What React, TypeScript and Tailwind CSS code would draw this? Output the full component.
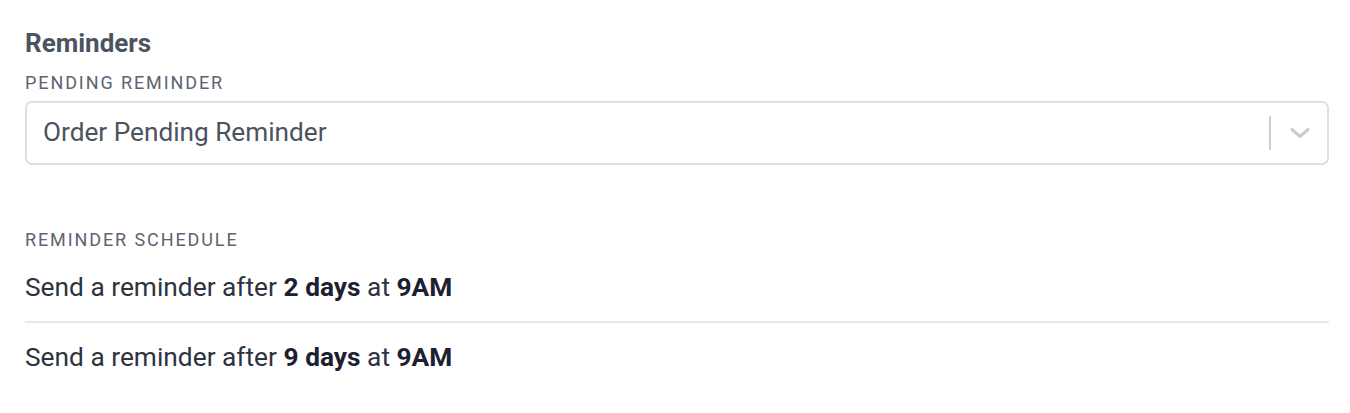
import React from "react";

function Row({ days, border }: { days: number; border?: boolean }) {
  return (
    <div
      className={
        "flex h-[69px] items-center text-[26.3px] text-[#2d3440] " +
        (border ? "border-b-2 border-[#e5e8ec]" : "")
      }
    >
      <span>
        Send a reminder after <span className="font-bold text-[#1b2130]">{days} days</span> at{" "}
        <span className="font-bold text-[#1b2130]">9AM</span>
      </span>
    </div>
  );
}

export default function App() {
  return (
    <div
      className="bg-white pl-[25px] pr-[21px] pt-[28px] h-[413px]"
      style={{ fontFamily: "Roboto, 'Liberation Sans', sans-serif" }}
    >
      <h2 className="text-[26px] font-bold leading-[30px] text-[#4b5360]">Reminders</h2>
      <div className="mt-[15px] text-[18px] leading-[20px] tracking-[1.9px] text-[#5c6470]">
        PENDING REMINDER
      </div>
      <div className="mt-[8px] flex h-[64px] items-center rounded-[7px] border-2 border-[#dcdfe3] pl-[16px] pr-[16px]">
        <span className="flex-1 text-[26.2px] text-[#4b5360]">Order Pending Reminder</span>
        <span className="h-[34px] w-[2px] bg-[#cfcfcf]" />
        <span className="ml-[18px] flex w-[22px] items-center justify-center">
          <svg width="20" height="10" viewBox="0 0 20 10" fill="none">
            <path d="M2 1.5 L10 8.5 L18 1.5" stroke="#cccccc" strokeWidth="3" strokeLinecap="round" strokeLinejoin="round" />
          </svg>
        </span>
      </div>
      <div className="mt-[65px] text-[18px] leading-[20px] tracking-[1.9px] text-[#5c6470]">
        REMINDER SCHEDULE
      </div>
      <div className="mt-[4px]">
        <Row days={2} border />
        <Row days={9} />
      </div>
    </div>
  );
}
